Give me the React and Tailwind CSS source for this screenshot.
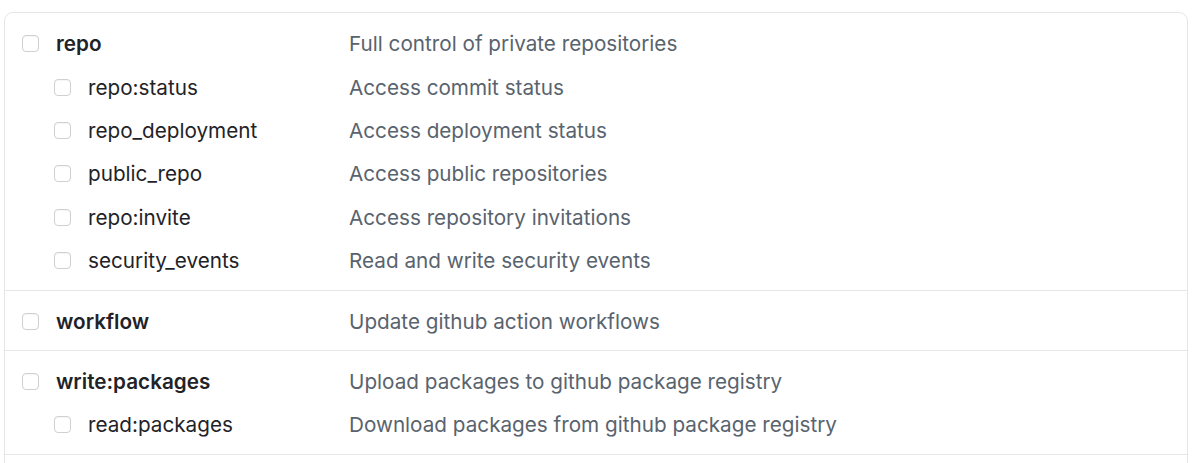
import React from "react";

const sections = [
  {
    parent: ["repo", "Full control of private repositories"],
    children: [
      ["repo:status", "Access commit status"],
      ["repo_deployment", "Access deployment status"],
      ["public_repo", "Access public repositories"],
      ["repo:invite", "Access repository invitations"],
      ["security_events", "Read and write security events"],
    ],
    pad: "pt-[9px] pb-[8px]",
  },
  {
    parent: ["workflow", "Update github action workflows"],
    children: [],
    pad: "pt-[8px] pb-[7px]",
  },
  {
    parent: ["write:packages", "Upload packages to github package registry"],
    children: [["read:packages", "Download packages from github package registry"]],
    pad: "pt-[9px] pb-[7px]",
  },
];

function Box() {
  return (
    <span className="block w-[17px] h-[17px] shrink-0 rounded-[4px] border border-[#d0d0d0] bg-white shadow-[inset_0_1px_1px_rgba(0,0,0,0.04)]" />
  );
}

function Row({ name, desc, child, bold }) {
  return (
    <div className="flex items-center h-[43.4px]">
      <div className={`flex items-center w-[344px] shrink-0 ${child ? "pl-[49px]" : "pl-[17px]"}`}>
        <Box />
        <span
          className={`ml-[17px] text-[20.7px] text-[#1f2328] ${bold ? "font-semibold" : "font-normal"}`}
        >
          {name}
        </span>
      </div>
      <span className="text-[20.7px] text-[#59636e]">{desc}</span>
    </div>
  );
}

export default function App() {
  return (
    <div
      className="w-[1200px] h-[463px] overflow-hidden bg-white pt-[12px] pl-[4px] pr-[12px]"
      style={{ fontFamily: "Inter, 'Liberation Sans', sans-serif" }}
    >
      <div className="rounded-[9px] border border-[#e6e6e6] h-[600px]">
        {sections.map((s, i) => (
          <div key={i} className={`${s.pad} ${i > 0 ? "border-t border-[#e6e6e6]" : ""}`}>
            <Row name={s.parent[0]} desc={s.parent[1]} bold />
            {s.children.map((c) => (
              <Row key={c[0]} name={c[0]} desc={c[1]} child />
            ))}
          </div>
        ))}
        <div className="border-t border-[#e6e6e6]" />
      </div>
    </div>
  );
}
